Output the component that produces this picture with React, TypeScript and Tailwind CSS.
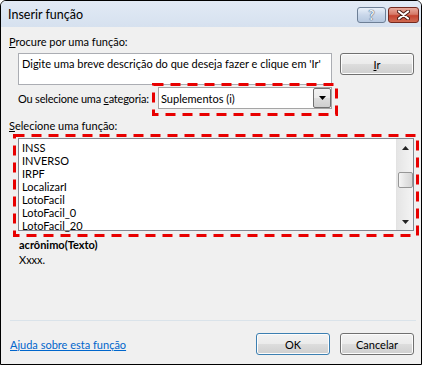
import React from 'react';

const FUNCTIONS = ['INSS', 'INVERSO', 'IRPF', 'LocalizarI', 'LotoFacil', 'LotoFacil_0', 'LotoFacil_20'];

const btn =
  'flex items-center justify-center h-[22px] w-[74px] rounded-[3px] border bg-[linear-gradient(#f2f2f2,#ebebeb_50%,#dddddd_50%,#cfcfcf)] shadow-[inset_0_0_0_1px_#fcfcfc]';

function DashedBox({ w, h, className }: { w: number; h: number; className: string }) {
  return (
    <svg className={`absolute pointer-events-none ${className}`} width={w} height={h}>
      <rect
        x={1.5}
        y={1.5}
        width={w - 3}
        height={h - 3}
        fill="none"
        stroke="#e80000"
        strokeWidth={3}
        strokeDasharray="10 7"
      />
    </svg>
  );
}

function TitleBar() {
  return (
    <div className="h-[26px] flex items-start bg-[linear-gradient(#e2eaf5,#d6e1ef)]">
      <span className="ml-[7px] mt-[6px] text-[12.5px] leading-[16px]">Inserir função</span>
      <div className="ml-auto mr-[2px] mt-[6px] flex gap-[2px]">
        <div className="w-[29px] h-[16px] rounded-[3px] border border-[#6d7f96] bg-[linear-gradient(#e9f0f9,#c9d7ea_50%,#b6c8df)] flex items-center justify-center">
          <span className="text-[13px] leading-[14px] font-bold text-[#eef3f9] [text-shadow:0_0_1px_#33465f,0_0_1px_#33465f]">?</span>
        </div>
        <div className="w-[31px] h-[16px] rounded-[3px] border border-[#74291f] bg-[linear-gradient(#e8aa9c,#d67a68_45%,#c5432f_55%,#cf6a52)] flex items-center justify-center">
          <svg width="13" height="10" viewBox="0 0 13 10">
            <path d="M2 1.5 L11 8.5 M11 1.5 L2 8.5" stroke="#4a1a14" strokeWidth="4" strokeLinecap="round" />
            <path d="M2 1.5 L11 8.5 M11 1.5 L2 8.5" stroke="#ffffff" strokeWidth="2.2" strokeLinecap="round" />
          </svg>
        </div>
      </div>
    </div>
  );
}

function ListBox() {
  return (
    <div className="relative ml-[17px] w-[396px] h-[93px] mt-[5px]">
      <div className="h-full border border-[#828790] bg-white flex">
        <div className="flex-1 pt-[2px] pl-[3px] leading-[13px]">
          {FUNCTIONS.map((f) => (
            <div key={f} className="h-[13px]">{f}</div>
          ))}
        </div>
        <div className="w-[17px] flex flex-col border-l border-[#e3e3e3] bg-[linear-gradient(90deg,#e5e5e5,#f4f4f4)]">
          <div className="h-[17px] flex items-center justify-center">
            <svg width="7" height="4"><path d="M0 4 L3.5 0 L7 4Z" fill="#222" /></svg>
          </div>
          <div className="flex-1">
            <div className="mt-[16px] mx-auto w-[15px] h-[16px] rounded-[2px] border border-[#979797] bg-[linear-gradient(90deg,#f6f6f6,#e4e4e4_50%,#d6d6d6)]" />
          </div>
          <div className="h-[17px] flex items-center justify-center">
            <svg width="7" height="4"><path d="M0 0 L7 0 L3.5 4Z" fill="#222" /></svg>
          </div>
        </div>
      </div>
      <DashedBox w={406} h={103} className="-left-[5px] -top-[4px]" />
    </div>
  );
}

export default function App() {
  return (
    <div className="w-[425px] h-[367px] bg-white font-['Lato','Liberation_Sans',sans-serif] text-[11px] leading-[15px] text-black">
      <div className="w-[422px] h-[365px] border border-black rounded-t-[6px] overflow-hidden flex flex-col">
        <TitleBar />

        <div className="flex-1 flex flex-col bg-[#f0f0f0]">
          <div className="pl-[8px] pt-[7px]">
            <u>P</u>rocure por uma função:
          </div>

          {/* search */}
          <div className="ml-[17px] mt-[4px] flex items-start">
            <div className="w-[314px] h-[32px] border border-[#abadb3] bg-white pt-[2px] pl-[3px] whitespace-nowrap">
              Digite uma breve descrição do que deseja fazer e clique em 'Ir'
            </div>
            <div className={`${btn} ml-[8px] border-[#707070]`}>
              <span><u>I</u>r</span>
            </div>
          </div>

          {/* category */}
          <div className="ml-[17px] mt-[2px] flex items-center">
            <div className="w-[140px] whitespace-nowrap tracking-[-0.2px]">
              Ou selecione uma <u>c</u>ategoria:
            </div>
            <div className="relative w-[174px] h-[22px]">
              <div className="h-full border border-[#a5a5a5] bg-white flex items-center">
                <span className="flex-1 pl-[2px]">Suplementos (i)</span>
                <div className="w-[18px] h-full rounded-[2px] border border-[#707070] bg-[linear-gradient(#f2f2f2,#ebebeb_50%,#dddddd_50%,#cfcfcf)] flex items-center justify-center">
                  <svg width="7" height="4"><path d="M0 0 L7 0 L3.5 4Z" fill="#000" /></svg>
                </div>
              </div>
              <DashedBox w={186} h={33} className="-left-[6px] -top-[4px]" />
            </div>
          </div>

          <div className="pl-[8px] mt-[9px]">
            <u>S</u>elecione uma função:
          </div>

          <ListBox />

          <div className="ml-[18px] mt-[6px]">
            <div className="font-bold">acrônimo(Texto)</div>
            <div>Xxxx.</div>
          </div>

          {/* footer */}
          <div className="mt-auto ml-[9px] mr-[5px] h-px bg-[#dae3ea]" />
          <div className="mt-[12px] mb-[9px] ml-[9px] mr-[7px] flex items-center">
            <a className="text-[#0066cc] underline" href="#">
              Ajuda sobre esta função
            </a>
            <div className={`${btn} ml-auto border-[#3c7fb1] shadow-[inset_0_0_0_1px_#c4e5f6]`}>OK</div>
            <div className={`${btn} ml-[10px] border-[#707070]`}>Cancelar</div>
          </div>
        </div>
      </div>
    </div>
  );
}
